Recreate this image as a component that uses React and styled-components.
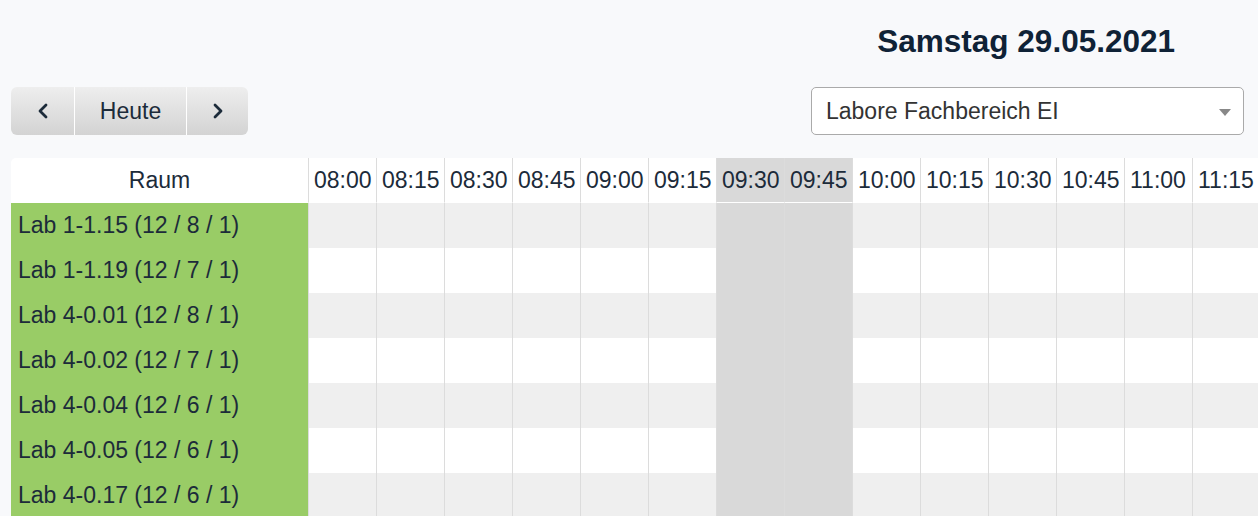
import React from "react";
import styled, { createGlobalStyle } from "styled-components";

const GlobalStyle = createGlobalStyle`
    html, body {
        margin: 0;
        padding: 0;
        background: #f8f9fb;
        overflow: hidden;
    }
    body {
        font-family: "Liberation Sans", Arial, sans-serif;
        color: #1c2b3a;
    }
`;

const Page = styled.div`
    width: 1258px;
    overflow: hidden;
    padding-left: 11px;
    box-sizing: border-box;
`;

const TitleRow = styled.div`
    display: flex;
    justify-content: flex-end;
    padding: 22px 83px 0 0;
    height: 65px;
    box-sizing: border-box;
`;

const Title = styled.h1`
    margin: 0;
    font-size: 31.5px;
    line-height: 38px;
    font-weight: bold;
    color: #0f2236;
`;

const Toolbar = styled.div`
    display: flex;
    justify-content: space-between;
    align-items: center;
    margin-top: 22px;
    padding-right: 14px;
    height: 48px;
`;

const ButtonGroup = styled.div`
    display: flex;
    height: 48px;
    border-radius: 6px;
    overflow: hidden;
`;

const NavButton = styled.button`
    width: ${(p) => p.$width}px;
    height: 48px;
    border: none;
    border-left: ${(p) => (p.$first ? "none" : "1px solid #fff")};
    background: linear-gradient(#eeeeee, #d3d3d3);
    font-family: "Liberation Sans", Arial, sans-serif;
    font-size: 23px;
    color: #1c2b3a;
    display: flex;
    align-items: center;
    justify-content: center;
    padding: 0;
    cursor: pointer;
`;

const Select = styled.div`
    position: relative;
    width: 433px;
    height: 48px;
    box-sizing: border-box;
    background: #fff;
    border: 1px solid #aaaaaa;
    border-radius: 5px;
    display: flex;
    align-items: center;
    padding-left: 14px;
    font-size: 23px;
    color: #333;
`;

const Arrow = styled.span`
    position: absolute;
    right: 12px;
    top: 21px;
    width: 0;
    height: 0;
    border-left: 6px solid transparent;
    border-right: 6px solid transparent;
    border-top: 7px solid #888;
`;

const Grid = styled.div`
    display: grid;
    grid-template-columns: 297px repeat(${(p) => p.$cols}, 68px);
    margin-top: 23px;
    width: max-content;
`;

const HeadCell = styled.div`
    height: 45px;
    box-sizing: border-box;
    display: flex;
    align-items: center;
    justify-content: ${(p) => (p.$room ? "center" : "flex-start")};
    padding-left: ${(p) => (p.$room ? "0" : "5px")};
    font-size: 23px;
    white-space: nowrap;
    background: ${(p) => (p.$hl ? "#d9d9d9" : "#fff")};
    border-left: ${(p) => (p.$room ? "none" : "1px solid #dcdcdc")};
    border-bottom: 1px solid #fff;
    border-top-left-radius: ${(p) => (p.$room ? "5px" : "0")};
`;

const RoomCell = styled.div`
    height: 45px;
    display: flex;
    align-items: center;
    padding-left: 7px;
    background: #99cc66;
    font-size: 23px;
    color: #1c2b3a;
`;

const SlotCell = styled.div`
    height: 45px;
    box-sizing: border-box;
    border-left: 1px solid #dcdcdc;
    background: ${(p) => (p.$hl ? "#d9d9d9" : p.$odd ? "#efefef" : "#fff")};
`;

function Chevron({ dir }) {
    const d = dir === "left" ? "M9 2 L3 8 L9 14" : "M3 2 L9 8 L3 14";
    return (
        <svg width="12" height="16" viewBox="0 0 12 16">
            <path d={d} fill="none" stroke="#1c2b3a" strokeWidth="2.8" strokeLinecap="round" strokeLinejoin="round" />
        </svg>
    );
}

// 08:00 - 11:15 in 15 minute slots
const times = [];
for (let h = 8; h <= 11; h++) {
    for (let m = 0; m < 60; m += 15) {
        times.push(`${String(h).padStart(2, "0")}:${String(m).padStart(2, "0")}`);
    }
}
times.splice(14);

const highlighted = ["09:30", "09:45"];

const rooms = [
    "Lab 1-1.15 (12 / 8 / 1)",
    "Lab 1-1.19 (12 / 7 / 1)",
    "Lab 4-0.01 (12 / 8 / 1)",
    "Lab 4-0.02 (12 / 7 / 1)",
    "Lab 4-0.04 (12 / 6 / 1)",
    "Lab 4-0.05 (12 / 6 / 1)",
    "Lab 4-0.17 (12 / 6 / 1)",
];

export default function App() {
    return (
        <Page>
            <GlobalStyle />
            <TitleRow>
                <Title>Samstag 29.05.2021</Title>
            </TitleRow>

            <Toolbar>
                <ButtonGroup>
                    <NavButton $width={63} $first>
                        <Chevron dir="left" />
                    </NavButton>
                    <NavButton $width={112}>Heute</NavButton>
                    <NavButton $width={62}>
                        <Chevron dir="right" />
                    </NavButton>
                </ButtonGroup>
                <Select>
                    Labore Fachbereich EI
                    <Arrow />
                </Select>
            </Toolbar>

            <Grid $cols={times.length}>
                <HeadCell $room>Raum</HeadCell>
                {times.map((t) => (
                    <HeadCell key={t} $hl={highlighted.includes(t)}>
                        {t}
                    </HeadCell>
                ))}
                {rooms.map((r, i) => (
                    <React.Fragment key={r}>
                        <RoomCell>{r}</RoomCell>
                        {times.map((t) => (
                            <SlotCell key={t} $odd={i % 2 === 0} $hl={highlighted.includes(t)} />
                        ))}
                    </React.Fragment>
                ))}
            </Grid>
        </Page>
    );
}
